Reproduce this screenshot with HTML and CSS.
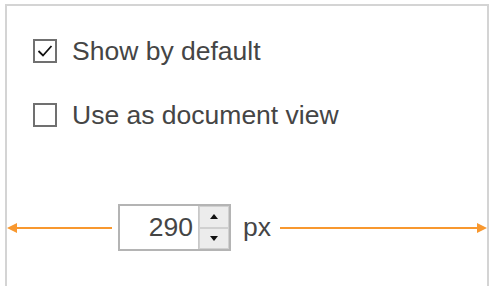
FILE: index.html
```html
<!DOCTYPE html>
<html>
<head>
    <meta charset="utf-8" />
    <title>View settings</title>
    <link rel="stylesheet" href="styles.css">
</head>
<body>
    <div class="panel">
        <label class="option">
            <span class="box">
                <svg width="20" height="20" viewBox="0 0 20 20"><path d="M3.5 10 L8 14.5 L16.5 5" fill="none" stroke="#111" stroke-width="1.8"/></svg>
            </span>
            <span class="label">Show by default</span>
        </label>
        <label class="option">
            <span class="box"></span>
            <span class="label">Use as document view</span>
        </label>

        <div class="width-row">
            <div class="arrow left">
                <div class="head"></div>
                <div class="line"></div>
            </div>
            <div class="spin">
                <div class="value">290</div>
                <div class="buttons">
                    <div class="btn"><span class="up"></span></div>
                    <div class="btn"><span class="down"></span></div>
                </div>
            </div>
            <span class="unit">px</span>
            <div class="arrow right">
                <div class="line"></div>
                <div class="head"></div>
            </div>
        </div>
    </div>
</body>
</html>
```

FILE: styles.css
```css
html, body {
  margin: 0;
  height: 286px;
  overflow: hidden;
  background: #fff;
}

body {
  font-family: "Liberation Sans", Arial, sans-serif;
  color: #454545;
}

.panel {
  margin: 4px 0 0 5px;
  width: 480px;
  height: 320px;
  border: 2px solid #d4d4d4;
  padding-top: 33px;
  box-sizing: content-box;
  display: flex;
  flex-direction: column;
  align-items: flex-start;
}

.option {
  display: flex;
  align-items: center;
  height: 24px;
  margin-left: 26px;
  margin-bottom: 40px;
}

.box {
  width: 20px;
  height: 20px;
  border: 2px solid #707070;
  display: flex;
  align-items: center;
  justify-content: center;
  flex: none;
}

.label {
  margin-left: 15px;
  font-size: 26.5px;
  line-height: 24px;
}

.width-row {
  align-self: stretch;
  display: flex;
  align-items: center;
  margin-top: 37px;
  height: 47px;
}

.arrow {
  display: flex;
  align-items: center;
}

.arrow.left {
  width: 105px;
}

.arrow.right {
  flex: 1;
}

.arrow .line {
  flex: 1;
  height: 2px;
  background: #f8982f;
}

.arrow .head {
  width: 0;
  height: 0;
  border-top: 5px solid transparent;
  border-bottom: 5px solid transparent;
}

.arrow.left .head {
  border-right: 10px solid #f8982f;
}

.arrow.right .head {
  border-left: 10px solid #f8982f;
}

.spin {
  margin-left: 6px;
  width: 109px;
  height: 43px;
  border: 2px solid #b4b4b4;
  display: flex;
  align-items: center;
}

.value {
  flex: 1;
  text-align: right;
  font-size: 26.5px;
  padding-right: 5px;
}

.buttons {
  width: 30px;
  height: 43px;
  display: flex;
  flex-direction: column;
  border-left: 1px solid #c8c8c8;
}

.btn {
  flex: 1;
  background: #ececec;
  border: 1px solid #d0d0d0;
  display: flex;
  align-items: center;
  justify-content: center;
}

.up, .down {
  width: 0;
  height: 0;
  border-left: 4px solid transparent;
  border-right: 4px solid transparent;
}

.up {
  border-bottom: 5px solid #111;
}

.down {
  border-top: 5px solid #111;
}

.unit {
  margin-left: 12px;
  margin-right: 9px;
  font-size: 26.5px;
}
```
